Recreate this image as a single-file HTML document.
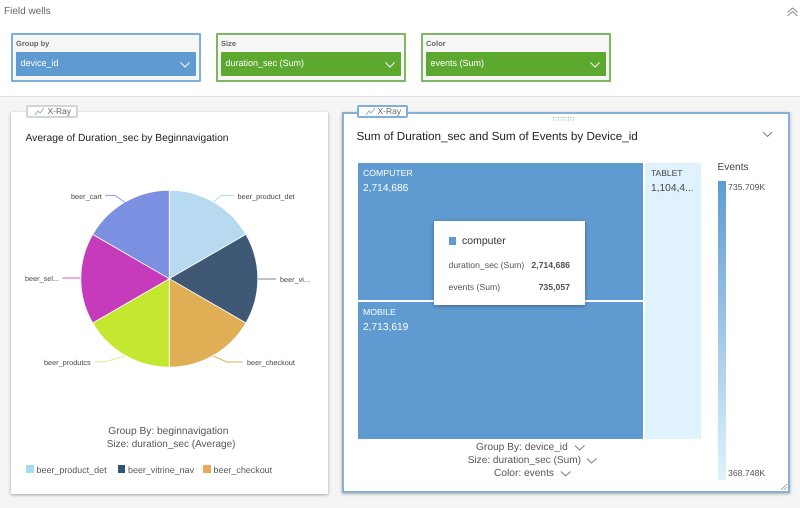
<!DOCTYPE html>
<html style="background:#f5f5f5"><head><meta charset="utf-8">
<style>
html,body{margin:0;padding:0}
body{width:800px;height:508px;overflow:hidden;background:#f5f5f5;font-family:"Liberation Sans",sans-serif;color:#555}
#w{position:relative;width:800px;height:508px;overflow:hidden;filter:blur(.3px);text-rendering:geometricPrecision}
.a{position:absolute;white-space:nowrap}
.well{position:absolute;top:33px;width:186px;height:45px;background:#f6f6f6;border:2px solid #7db761;border-radius:1px}
.well .l{position:absolute;left:3px;top:4px;font-size:7.500px;font-weight:bold;color:#666}
.well .b{position:absolute;left:3px;top:17px;width:180px;height:24px;background:#5da82f;border-radius:1px;color:#fff;font-size:9px;line-height:23px;text-indent:4.500px}
.well svg{position:absolute;left:163px;top:9px}
.xr{position:absolute;top:105px;height:9px;background:#fff;border:2px solid #d4d4d4;border-radius:2px;font-size:8.500px;line-height:9px;color:#666}
.lab{font-size:7.300px;color:#444}
</style></head><body><div id="w">
<div class="a" style="left:0;top:0;width:800px;height:96px;background:#fff;border-bottom:1px solid #e0e0e0"></div>
<div class="a" style="left:4px;top:6px;font-size:10px;color:#666">Field wells</div>
<svg class="a" style="left:786px;top:6px" width="14" height="12" viewBox="0 0 14 12" fill="none" stroke="#888" stroke-width="1"><path d="M1.500 6.500L6.500 2L11.500 6.500M1.500 10L6.500 5.500L11.500 10"/></svg>

<div class="well" style="left:11px;border-color:#7fb0dc"><div class="l">Group by</div><div class="b" style="background:#5f9bd1">device_id<svg width="12" height="8" viewBox="0 0 12 8" fill="none" stroke="#fff"><path d="M1.500 1.500L6 6L10.500 1.500"/></svg></div></div>
<div class="well" style="left:216px"><div class="l">Size</div><div class="b">duration_sec (Sum)<svg width="12" height="8" viewBox="0 0 12 8" fill="none" stroke="#fff"><path d="M1.500 1.500L6 6L10.500 1.500"/></svg></div></div>
<div class="well" style="left:421px"><div class="l">Color</div><div class="b">events (Sum)<svg width="12" height="8" viewBox="0 0 12 8" fill="none" stroke="#fff"><path d="M1.500 1.500L6 6L10.500 1.500"/></svg></div></div>

<!-- left card -->
<div class="a" style="left:11px;top:112px;width:317px;height:382px;background:#fff;box-shadow:0 1px 3px rgba(0,0,0,.35)"></div>
<div class="xr" style="left:26px;width:48px"><svg class="a" style="left:6px;top:0" width="11" height="9" viewBox="0 0 11 9" fill="none" stroke="#8db4d6"><path d="M1 8L4 4L6 6L10 1"/></svg><span class="a" style="left:19.500px;top:0">X-Ray</span></div>
<div class="a" style="left:25.500px;top:132.500px;font-size:10.300px;color:#222">Average of Duration_sec by Beginnavigation</div>

<svg class="a" style="left:0;top:170px" width="335" height="210" viewBox="0 170 335 210">
<g stroke="#fff" stroke-width=".8">
<path d="M169.300 278.700L169.300 190.200A88.500 88.500 0 0 1 245.900 234.400Z" fill="#b7daf1"/>
<path d="M169.300 278.700L245.900 234.400A88.500 88.500 0 0 1 245.900 323Z" fill="#3f5875"/>
<path d="M169.300 278.700L245.900 323A88.500 88.500 0 0 1 169.300 367.200Z" fill="#e0ae55"/>
<path d="M169.300 278.700L169.300 367.200A88.500 88.500 0 0 1 92.700 323Z" fill="#c4e82f"/>
<path d="M169.300 278.700L92.700 323A88.500 88.500 0 0 1 92.700 234.400Z" fill="#c53bbc"/>
<path d="M169.300 278.700L92.700 234.400A88.500 88.500 0 0 1 169.300 190.200Z" fill="#7b90e0"/>
</g>
<g fill="none" stroke-width="1">
<path d="M213.500 202L221.700 195.400H234.300" stroke="#b7daf1"/>
<path d="M258 279H276" stroke="#7a8798"/>
<path d="M213.300 356L226.700 362H242.700" stroke="#e0ae55"/>
<path d="M125 356L105 361.800H95" stroke="#dcee85"/>
<path d="M80.500 278H62.300" stroke="#d659cf"/>
<path d="M125 202.300L115 195.400H105" stroke="#8b9ee3"/>
</g>
</svg>
<div class="a lab" style="left:71px;top:192px">beer_cart</div>
<div class="a lab" style="left:237.500px;top:192px">beer_product_det</div>
<div class="a lab" style="left:280px;top:275px">beer_vi...</div>
<div class="a lab" style="left:25px;top:274px">beer_sel...</div>
<div class="a lab" style="left:44px;top:358px">beer_produtcs</div>
<div class="a lab" style="left:247px;top:358px">beer_checkout</div>

<div class="a" style="left:108.300px;top:425.500px;font-size:10.200px">Group By: beginnavigation</div>
<div class="a" style="left:106.700px;top:438.500px;font-size:10px">Size: duration_sec (Average)</div>

<div class="a" style="left:25.500px;top:465px;width:8px;height:8px;background:#a9dbf0"></div>
<div class="a" style="left:36.500px;top:465px;font-size:8.950px">beer_product_det</div>
<div class="a" style="left:117.500px;top:465px;width:7px;height:8px;background:#335472"></div>
<div class="a" style="left:128px;top:465px;font-size:8.950px">beer_vitrine_nav</div>
<div class="a" style="left:202.500px;top:465px;width:8px;height:8px;background:#e8a85c"></div>
<div class="a" style="left:213.500px;top:465px;font-size:8.950px">beer_checkout</div>

<!-- right card -->
<div class="a" style="left:342px;top:112px;width:444px;height:377px;background:#fff;border:2px solid #86b0d6;box-shadow:0 1px 3px rgba(0,0,0,.3)"></div>
<div class="xr" style="left:357px;width:47px;border-color:#7fb0dc"><svg class="a" style="left:6px;top:0" width="11" height="9" viewBox="0 0 11 9" fill="none" stroke="#8db4d6"><path d="M1 8L4 4L6 6L10 1"/></svg><span class="a" style="left:18.500px;top:0">X-Ray</span></div>
<svg class="a" style="left:552px;top:116px" width="24" height="7" fill="#aaa"><rect x="1" y="1" width="1" height="1"/><rect x="3.500" y="1" width="1" height="1"/><rect x="6" y="1" width="1" height="1"/><rect x="8.500" y="1" width="1" height="1"/><rect x="11" y="1" width="1" height="1"/><rect x="13.500" y="1" width="1" height="1"/><rect x="16" y="1" width="1" height="1"/><rect x="18.500" y="1" width="1" height="1"/><rect x="21" y="1" width="1" height="1"/><rect x="1" y="3.500" width="1" height="1"/><rect x="3.500" y="3.500" width="1" height="1"/><rect x="6" y="3.500" width="1" height="1"/><rect x="8.500" y="3.500" width="1" height="1"/><rect x="11" y="3.500" width="1" height="1"/><rect x="13.500" y="3.500" width="1" height="1"/><rect x="16" y="3.500" width="1" height="1"/><rect x="18.500" y="3.500" width="1" height="1"/><rect x="21" y="3.500" width="1" height="1"/></svg>
<div class="a" style="left:356.500px;top:130px;font-size:11.700px;color:#222">Sum of Duration_sec and Sum of Events by Device_id</div>
<svg class="a" style="left:761px;top:130px" width="13" height="9" viewBox="0 0 13 9" fill="none" stroke="#777" stroke-width=".9"><path d="M2 2L6.500 6.500L11 2"/></svg>

<div class="a" style="left:357.500px;top:163px;width:285.500px;height:136.500px;background:#5f9bd1"></div>
<div class="a" style="left:357.500px;top:301.500px;width:285.500px;height:137px;background:#5f9bd1"></div>
<div class="a" style="left:645px;top:163px;width:56px;height:275.500px;background:#e0f2fd"></div>
<div class="a" style="left:363px;top:168px;font-size:8.700px;color:#fff">COMPUTER</div>
<div class="a" style="left:363px;top:182.500px;font-size:10.200px;color:#fff">2,714,686</div>
<div class="a" style="left:363px;top:306.500px;font-size:8.700px;color:#fff">MOBILE</div>
<div class="a" style="left:363px;top:321.500px;font-size:10.200px;color:#fff">2,713,619</div>
<div class="a" style="left:651px;top:168px;font-size:8.500px;color:#444">TABLET</div>
<div class="a" style="left:651px;top:182.500px;font-size:10.200px;color:#444">1,104,4...</div>

<div class="a" style="left:434px;top:221px;width:151px;height:84px;background:#fff;box-shadow:0 1px 4px rgba(0,0,0,.35)"></div>
<div class="a" style="left:448.500px;top:237px;width:7px;height:7.500px;background:#5f9bd1"></div>
<div class="a" style="left:462px;top:235px;font-size:10.500px;color:#333">computer</div>
<div class="a" style="left:448.500px;top:259.500px;font-size:8.700px">duration_sec (Sum)</div>
<div class="a" style="left:531px;top:259.500px;font-size:8.700px;font-weight:bold;width:39px;text-align:right">2,714,686</div>
<div class="a" style="left:448.500px;top:281.500px;font-size:8.700px">events (Sum)</div>
<div class="a" style="left:531px;top:281.500px;font-size:8.700px;font-weight:bold;width:39px;text-align:right">735,057</div>

<div class="a" style="left:717.500px;top:162px;font-size:10.200px;color:#444">Events</div>
<div class="a" style="left:717.500px;top:180.500px;width:8.500px;height:299px;background:linear-gradient(#5f9bd1,#e0f2fd)"></div>
<div class="a" style="left:728px;top:181.500px;font-size:8.700px">735.709K</div>
<div class="a" style="left:728px;top:467.500px;font-size:8.700px">368.748K</div>

<div class="a" style="left:476px;top:441.500px;font-size:10.200px">Group By: device_id</div>
<svg class="a" style="left:574px;top:444px" width="12" height="8" viewBox="0 0 12 8" fill="none" stroke="#777" stroke-width=".9"><path d="M1 1.500L5.500 6L10.500 1.500"/></svg>
<div class="a" style="left:467.700px;top:454.500px;font-size:10.100px">Size: duration_sec (Sum)</div>
<svg class="a" style="left:586px;top:457px" width="12" height="8" viewBox="0 0 12 8" fill="none" stroke="#777" stroke-width=".9"><path d="M1 1.500L5.500 6L10.500 1.500"/></svg>
<div class="a" style="left:494px;top:468px;font-size:10.200px">Color: events</div>
<svg class="a" style="left:560px;top:470px" width="12" height="8" viewBox="0 0 12 8" fill="none" stroke="#777" stroke-width=".9"><path d="M1 1.500L5.500 6L10.500 1.500"/></svg>
<svg class="a" style="left:780px;top:483px" width="8" height="8" fill="none" stroke="#999" stroke-width=".8"><path d="M1 7L7 1M4 7L7 4"/></svg>
</div></body></html>
